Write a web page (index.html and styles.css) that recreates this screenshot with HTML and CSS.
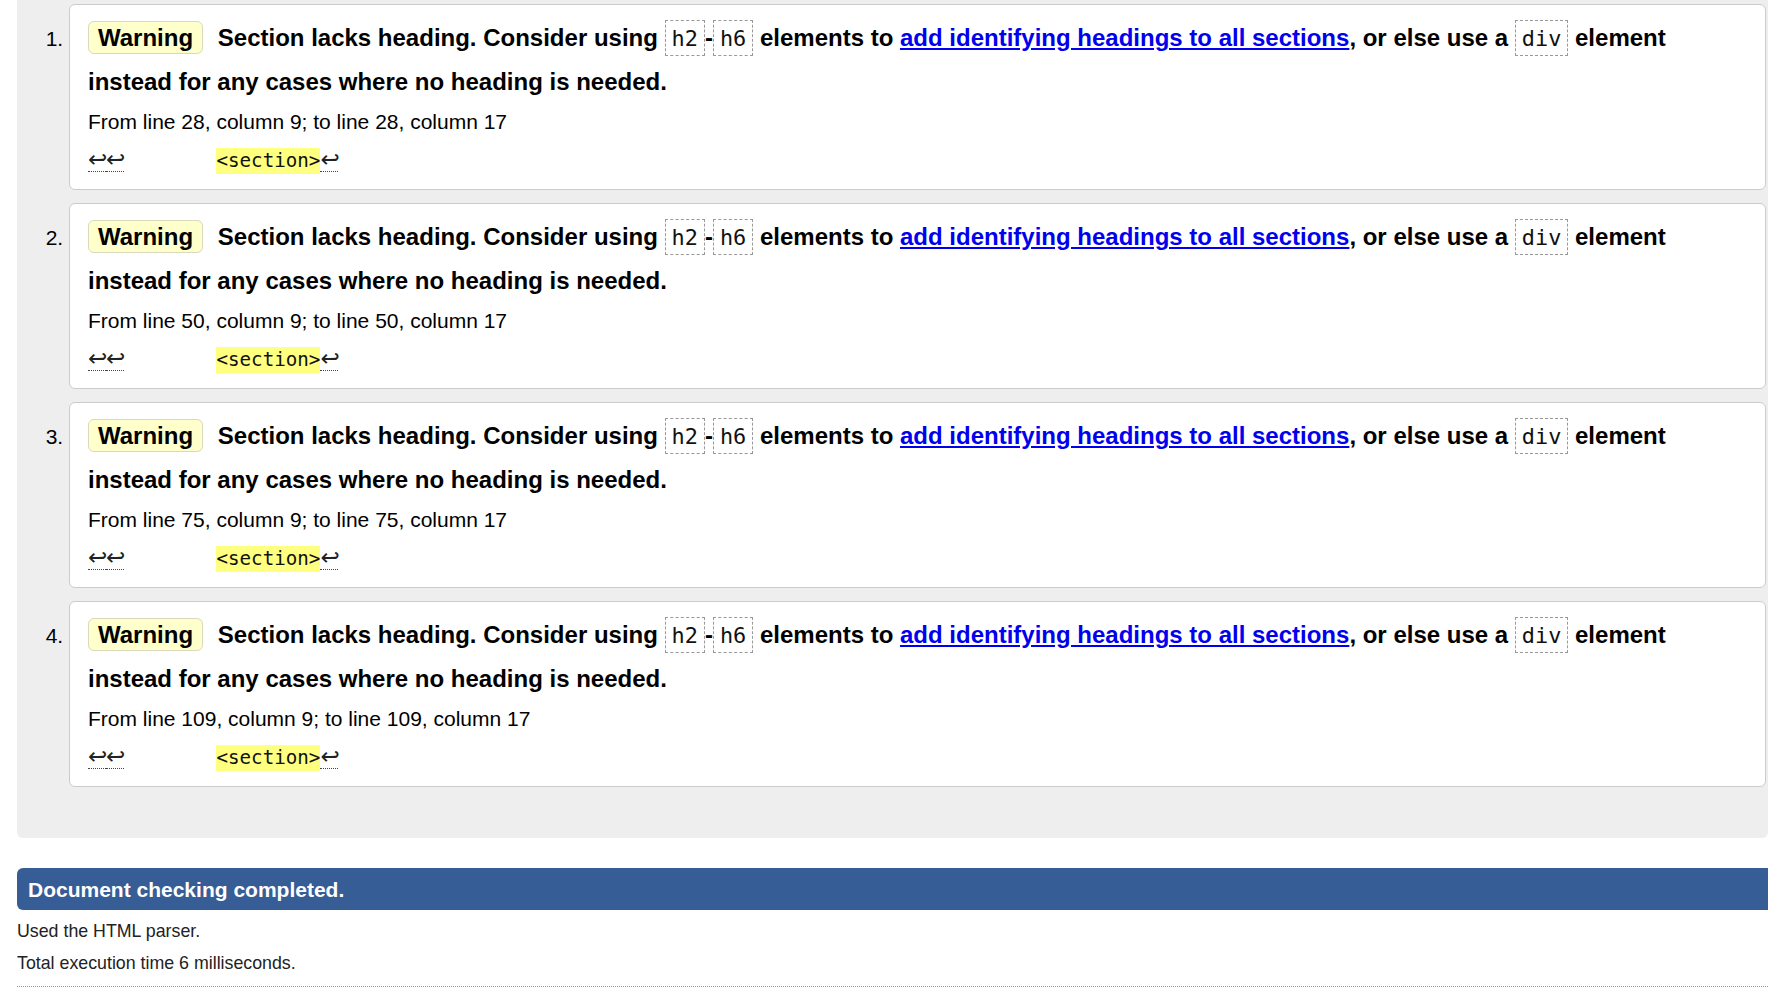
FILE: index.html
```html
<!DOCTYPE html>
<html lang="en">
<head>
<meta charset="utf-8">
<title>Nu Html Checker results</title>
<link rel="stylesheet" href="styles.css">
</head>
<body>
<div class="results">
  <ol class="messages">
    <li class="item">
      <p class="msg"><strong class="badge">Warning</strong> <span>Section lacks heading. Consider using <code class="tag">h2</code>-<code class="tag">h6</code> elements to <a class="link" href="#">add identifying headings to all sections</a>, or else use a <code class="tag">div</code> element instead for any cases where no heading is needed.</span></p>
      <p class="location">From line 28, column 9; to line 28, column 17</p>
      <p class="extract"><code class="src"><b class="lf">↩</b><b class="lf">↩</b>        <mark class="hl">&lt;section&gt;</mark><b class="lf">↩</b></code></p>
    </li>
    <li class="item">
      <p class="msg"><strong class="badge">Warning</strong> <span>Section lacks heading. Consider using <code class="tag">h2</code>-<code class="tag">h6</code> elements to <a class="link" href="#">add identifying headings to all sections</a>, or else use a <code class="tag">div</code> element instead for any cases where no heading is needed.</span></p>
      <p class="location">From line 50, column 9; to line 50, column 17</p>
      <p class="extract"><code class="src"><b class="lf">↩</b><b class="lf">↩</b>        <mark class="hl">&lt;section&gt;</mark><b class="lf">↩</b></code></p>
    </li>
    <li class="item">
      <p class="msg"><strong class="badge">Warning</strong> <span>Section lacks heading. Consider using <code class="tag">h2</code>-<code class="tag">h6</code> elements to <a class="link" href="#">add identifying headings to all sections</a>, or else use a <code class="tag">div</code> element instead for any cases where no heading is needed.</span></p>
      <p class="location">From line 75, column 9; to line 75, column 17</p>
      <p class="extract"><code class="src"><b class="lf">↩</b><b class="lf">↩</b>        <mark class="hl">&lt;section&gt;</mark><b class="lf">↩</b></code></p>
    </li>
    <li class="item">
      <p class="msg"><strong class="badge">Warning</strong> <span>Section lacks heading. Consider using <code class="tag">h2</code>-<code class="tag">h6</code> elements to <a class="link" href="#">add identifying headings to all sections</a>, or else use a <code class="tag">div</code> element instead for any cases where no heading is needed.</span></p>
      <p class="location">From line 109, column 9; to line 109, column 17</p>
      <p class="extract"><code class="src"><b class="lf">↩</b><b class="lf">↩</b>        <mark class="hl">&lt;section&gt;</mark><b class="lf">↩</b></code></p>
    </li>
  </ol>
</div>
<p class="done">Document checking completed.</p>
<p class="info first">Used the HTML parser.</p>
<p class="info">Total execution time 6 milliseconds.</p>
<hr class="sep">
</body>
</html>
```
FILE: styles.css
```css
html, body {
  margin: 0;
  padding: 0;
  background: #fff;
}
body {
  font-family: "Liberation Sans", Arial, sans-serif;
  color: #000;
  overflow-x: hidden;
}
.results {
  margin-left: 17px;
  background: #eeeeee;
  padding-top: 4px;
  border-radius: 0 0 6px 6px;
}
.messages {
  margin: 0;
  padding: 0 2px 38px 52px;
  font-size: 21px;
}
.item {
  background: #fff;
  border: 1px solid #cccccc;
  border-radius: 6px;
  padding: 11px 40px 14px 18px;
  margin-bottom: 13px;
}
.msg {
  margin: 0;
  font-size: 24px;
  font-weight: bold;
  line-height: 44px;
}
.badge {
  background: #ffffcc;
  border: 1px solid #d9d9bf;
  border-radius: 6px;
  padding: 2px 9px;
  margin-right: 8px;
}
.tag {
  font-family: "DejaVu Sans Mono", monospace;
  font-size: 21.9px;
  line-height: 1;
  font-weight: normal;
  border: 1px dashed #999;
  padding: 5px 6px 4px;
  color: #111;
}
.link {
  color: #0000ee;
  text-decoration: underline;
}
.location {
  margin: 3px 0 0;
  line-height: 30px;
  font-size: 21px;
}
.extract {
  margin: 8px 0 0;
  line-height: 30px;
  font-size: 21px;
}
.src {
  font-family: "DejaVu Sans Mono", monospace;
  font-size: 19.2px;
  line-height: 1;
  white-space: pre;
  color: #111;
}
.hl {
  background: #ffff80;
  color: #111;
  padding: 1px 0 2px;
}
.lf {
  display: inline-block;
  width: 18px;
  text-align: center;
  font-family: "DejaVu Sans", sans-serif;
  font-weight: normal;
  font-size: 23px;
  line-height: 18px;
  padding-bottom: 3px;
  border-bottom: 1px dotted #444;
  color: #222;
  vertical-align: baseline;
}
.done {
  margin: 30px 0 0 17px;
  background: #365d95;
  color: #fff;
  font-size: 21px;
  font-weight: bold;
  line-height: 40px;
  padding: 2px 11px 0;
  border-radius: 6px 0 0 6px;
}
.info {
  margin: 0 0 0 17px;
  font-size: 17.8px;
  line-height: 32px;
  color: #222;
}
.first {
  margin-top: 5px;
}
.sep {
  margin: 7px 0 0 17px;
  border: 0;
  border-top: 1px dotted #999;
  height: 0;
}
```
